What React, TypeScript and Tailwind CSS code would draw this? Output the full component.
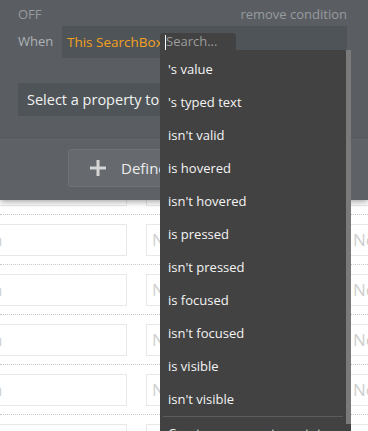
const items = [
  "'s value",
  "'s typed text",
  "isn't valid",
  'is hovered',
  "isn't hovered",
  'is pressed',
  "isn't pressed",
  'is focused',
  "isn't focused",
  'is visible',
  "isn't visible",
]

function Row() {
  return (
    <div className="flex gap-[19px] pt-[9px] pb-[8px] border-b border-dotted border-[#c8c8c8]">
      <div className="ml-[-40px] w-[167px] h-8 shrink-0 bg-white border border-[#e8e8e8] flex items-center pl-[8px] text-[17px] text-[#cfcfcf]">
        Icon
      </div>
      <div className="w-[184px] h-8 shrink-0 bg-white border border-[#e8e8e8] flex items-center pl-[5px] text-[17px] text-[#cfcfcf]">
        None
      </div>
      <div className="w-[120px] h-8 shrink-0 bg-white border border-[#e8e8e8] flex items-center pl-[3px] text-[17px] text-[#cfcfcf]">
        None
      </div>
    </div>
  )
}

export default function App() {
  return (
    <div
      className="relative w-[368px] h-[431px] overflow-hidden bg-white"
      style={{ fontFamily: '"Open Sans", "Noto Sans", sans-serif' }}
    >
      {/* condition panel */}
      <div className="relative z-10 h-[200px] bg-[#5e6266] shadow-[0_2px_6px_rgba(0,0,0,0.35)]">
        <div className="h-[138px] bg-[#5a5e62] border-b border-[#54585c] px-[18px] pt-[5px]">
          <div className="flex justify-between pr-[3px] text-[13px] leading-[18px] text-[#979b9f]">
            <span>OFF</span>
            <span>remove condition</span>
          </div>
          <div className="flex items-center mt-[3px]">
            <span className="w-[44px] text-[13px] text-[#aeb2b6]">When</span>
            <div className="w-[285px] h-8 bg-[#4f5458] flex items-center pl-[5px] text-[13.5px] text-[#f3a11f]">
              This SearchBox
            </div>
          </div>
          <div className="mt-[25px] w-[329px] h-[33px] bg-[#4f5458] flex items-center pl-[9px] text-[14.5px] text-[#f2f2f2]">
            Select a property to change
          </div>
        </div>
        <div className="pl-[68px] pt-[11px]">
          <div className="w-[240px] h-[38px] bg-[#666a6e] border border-[#6e7276] rounded-[3px] flex items-center pl-[21px] gap-[15px] text-[15px] text-[#ececec]">
            <svg width="16" height="16" viewBox="0 0 16 16" className="shrink-0">
              <rect x="6.5" y="0" width="3" height="16" fill="#d4d4d4" />
              <rect x="0" y="6.5" width="16" height="3" fill="#d4d4d4" />
            </svg>
            <span>Define another property</span>
          </div>
        </div>
      </div>

      {/* element rows */}
      <div className="mt-[-35px]">
        <Row />
        <Row />
        <Row />
        <Row />
        <Row />
        <Row />
      </div>

      {/* dropdown */}
      <div className="absolute left-[160px] top-[33px] z-20">
        <div className="w-[76px] h-[17px] bg-[#424242] rounded-t-[3px] flex items-center pl-[6px] text-[13px] text-[#9c9c9c] relative">
          <span className="absolute left-[5px] top-[2px] w-px h-[15px] bg-white" />
          Search...
        </div>
        <div className="relative w-[191px] h-[400px] bg-[#424242] pt-[3px]">
          {items.map((t) => (
            <div key={t} className="h-[33px] flex items-center pl-[8px] text-[13px] text-[#f4f4f4]">
              {t}
            </div>
          ))}
          <div className="mx-[3px] w-[180px] border-t border-[#5c5c5c]" />
          <div className="h-[33px] flex items-center pl-[8px] text-[13px] text-[#f4f4f4]">
            Create a new custom state
          </div>
          <div className="absolute right-0 top-0 w-[5px] h-[374px] bg-[#7a7a7a]" />
        </div>
      </div>
    </div>
  )
}
